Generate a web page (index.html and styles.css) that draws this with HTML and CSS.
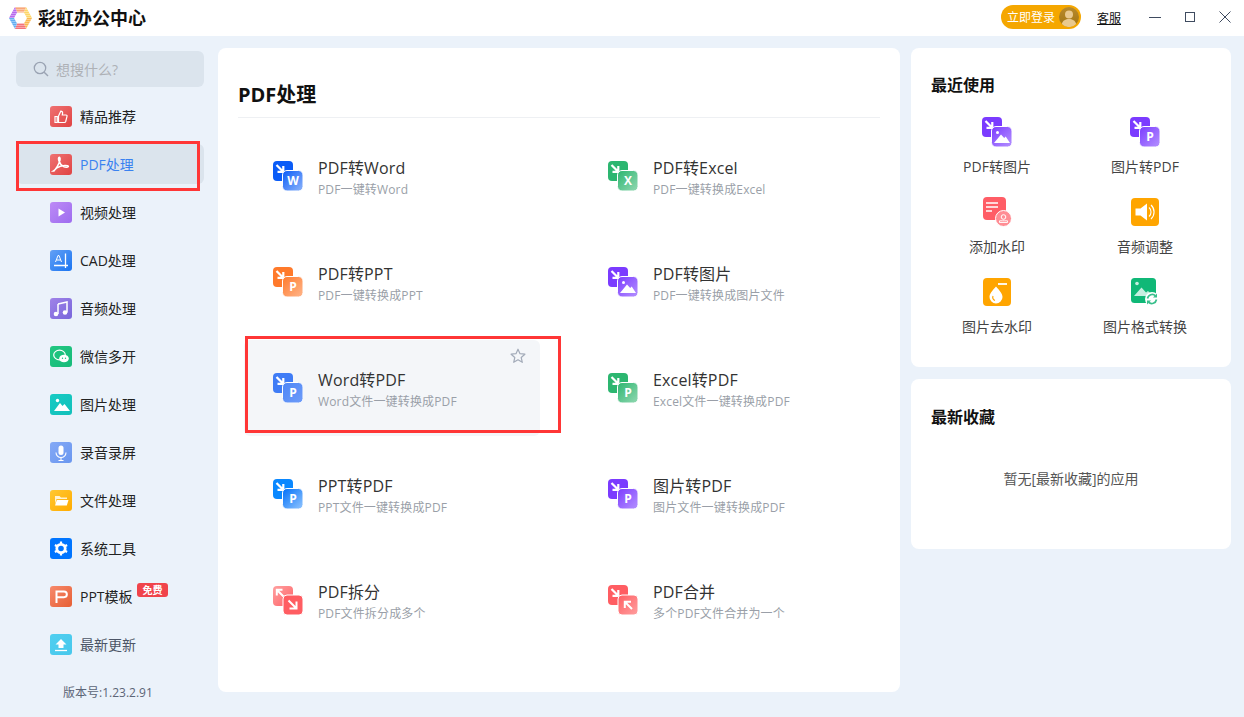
FILE: index.html
```html
<!DOCTYPE html>
<html lang="zh-CN">
<head>
<meta charset="utf-8">
<title>彩虹办公中心</title>
<link rel="stylesheet" href="styles.css">
</head>
<body>
<svg class="defs" width="0" height="0" aria-hidden="true">
  <defs>
    <linearGradient id="s-red" x1="0" y1="0" x2="1" y2="1"><stop offset="0" stop-color="#ef7272"/><stop offset="1" stop-color="#e04343"/></linearGradient>
    <linearGradient id="s-purple" x1="0" y1="0" x2="1" y2="1"><stop offset="0" stop-color="#bd8bf6"/><stop offset="1" stop-color="#9d6cef"/></linearGradient>
    <linearGradient id="s-blue" x1="0" y1="0" x2="1" y2="1"><stop offset="0" stop-color="#63a0f5"/><stop offset="1" stop-color="#1a75f2"/></linearGradient>
    <linearGradient id="s-music" x1="0" y1="0" x2="1" y2="1"><stop offset="0" stop-color="#a083e8"/><stop offset="1" stop-color="#7866db"/></linearGradient>
    <linearGradient id="s-green" x1="0" y1="0" x2="1" y2="1"><stop offset="0" stop-color="#22c781"/><stop offset="1" stop-color="#17bb7a"/></linearGradient>
    <linearGradient id="s-teal" x1="0" y1="0" x2="1" y2="1"><stop offset="0" stop-color="#18cbc4"/><stop offset="1" stop-color="#12c0ba"/></linearGradient>
    <linearGradient id="s-mic" x1="0" y1="0" x2="1" y2="1"><stop offset="0" stop-color="#84a9f6"/><stop offset="1" stop-color="#6a97ef"/></linearGradient>
    <linearGradient id="s-folder" x1="0" y1="0" x2="1" y2="1"><stop offset="0" stop-color="#ffc832"/><stop offset="1" stop-color="#ffab00"/></linearGradient>
    <linearGradient id="s-ppt" x1="0" y1="0" x2="1" y2="1"><stop offset="0" stop-color="#f78a6c"/><stop offset="1" stop-color="#e65f34"/></linearGradient>
    <linearGradient id="s-up" x1="0" y1="0" x2="1" y2="1"><stop offset="0" stop-color="#50cff0"/><stop offset="1" stop-color="#48c8ec"/></linearGradient>

    <linearGradient id="f-word" x1="0" y1="0" x2="1" y2="1"><stop offset="0" stop-color="#0a5cf7"/><stop offset="1" stop-color="#8db4fb"/></linearGradient>
    <linearGradient id="f-orange" x1="0" y1="0" x2="1" y2="1"><stop offset="0" stop-color="#ff7a2b"/><stop offset="1" stop-color="#ffb68c"/></linearGradient>
    <linearGradient id="f-w2p" x1="0" y1="0" x2="1" y2="1"><stop offset="0" stop-color="#4e86f6"/><stop offset="1" stop-color="#6e9cf9"/></linearGradient>
    <linearGradient id="f-green" x1="0" y1="0" x2="1" y2="1"><stop offset="0" stop-color="#2cb670"/><stop offset="1" stop-color="#93d8b2"/></linearGradient>
    <linearGradient id="f-purple" x1="0" y1="0" x2="1" y2="1"><stop offset="0" stop-color="#7b3bff"/><stop offset="1" stop-color="#b592ff"/></linearGradient>
    <linearGradient id="f-ppt2" x1="0" y1="0" x2="1" y2="1"><stop offset="0" stop-color="#006ff8"/><stop offset="1" stop-color="#93c6ff"/></linearGradient>
    <linearGradient id="f-pink" x1="0" y1="0" x2="1" y2="1"><stop offset="0" stop-color="#ff5d62"/><stop offset="1" stop-color="#ffa0a0"/></linearGradient>
    <linearGradient id="b-pink" x1="0" y1="0" x2="1" y2="1"><stop offset="0" stop-color="#ffa0a0"/><stop offset="1" stop-color="#ff6267"/></linearGradient>

    <linearGradient id="av" x1="0" y1="0" x2="0" y2="1"><stop offset="0" stop-color="#b88a2c"/><stop offset="1" stop-color="#a27512"/></linearGradient>
    <pattern id="stripes" width="2" height="2" patternUnits="userSpaceOnUse"><rect width="2" height="1" fill="#fff" fill-opacity=".35"/></pattern>

    <symbol id="arr" viewBox="0 0 30 30"><path d="M3.500 4 9.500 10M10.300 5V10.800H4.500" fill="none" stroke="#fff" stroke-width="2.200"/></symbol>
    <symbol id="pic" viewBox="0 0 30 30"><circle cx="15.500" cy="15.500" r="1.500" fill="#fff"/><path d="M12 26 19 17.500l3.200 3.500 1.500-1.500L28 26z" fill="#fff"/></symbol>
  </defs>
</svg>

<div class="app">
  <header class="titlebar">
    <svg class="logo" viewBox="0 0 24 22" width="24" height="22" aria-hidden="true">
      <polygon points="6,0 17,0 15,5.500 8,5.500" fill="#f9a779"/>
      <polygon points="17,0 23,11 18,11 15,5.500" fill="#fdd668"/>
      <polygon points="23,11 17,22 15,16.500 18,11" fill="#fbb84f"/>
      <polygon points="17,22 6,22 8,16.500 15,16.500" fill="#f4747a"/>
      <polygon points="6,22 0,11 5,11 8,16.500" fill="#62aef2"/>
      <polygon points="0,11 6,0 8,5.500 5,11" fill="#b769ee"/>
      <path d="M6 0H17L23 11 17 22H6L0 11ZM8 5.500 5 11 8 16.500H15L18 11 15 5.500Z" fill="url(#stripes)" fill-rule="evenodd"/>
    </svg>
    <span class="app-name">彩虹办公中心</span>
    <div class="title-actions">
      <div class="login">
        <span>立即登录</span>
        <svg class="avatar" viewBox="0 0 20 20" width="20" height="20" aria-hidden="true">
          <circle cx="10" cy="10" r="10" fill="url(#av)"/>
          <circle cx="10" cy="7.500" r="4" fill="#e9c98e"/>
          <path d="M2.800 17c1-3.600 3.800-5 7.200-5s6.200 1.400 7.200 5a10 10 0 0 1-14.400 0z" fill="#e9c98e"/>
        </svg>
      </div>
      <a class="service">客服</a>
      <svg class="win min" viewBox="0 0 12 12" width="12" height="12" aria-hidden="true"><path d="M0 6.500H12" stroke="#3f4b60" fill="none"/></svg>
      <svg class="win max" viewBox="0 0 12 12" width="12" height="12" aria-hidden="true"><rect x="1.500" y="1.500" width="9" height="9" stroke="#3f4b60" fill="none"/></svg>
      <svg class="win close" viewBox="0 0 12 12" width="12" height="12" aria-hidden="true"><path d="M.5.500 11.500 11.500M11.500.500.500 11.500" stroke="#3f4b60" fill="none"/></svg>
    </div>
  </header>

  <div class="content">
    <aside class="sidebar">
      <div class="search">
        <svg viewBox="0 0 16 16" width="16" height="16" aria-hidden="true"><circle cx="7" cy="7" r="5.700" fill="none" stroke="#9aa3b3" stroke-width="1.300"/><path d="M11.200 11.200 15 15" stroke="#9aa3b3" stroke-width="1.400" fill="none"/></svg>
        <span>想搜什么?</span>
      </div>
      <nav class="menu">
        <a class="menu-item">
          <svg class="mi" viewBox="0 0 22 21" aria-hidden="true"><rect width="22" height="21" rx="3" fill="url(#s-red)"/><path d="M5 10.500H7.200V16.500H5zM8.500 10 10.800 5.200c1.300 0 1.900.8 1.800 1.900L12.300 9H16c.8 0 1.200.6 1 1.300L15.700 15.500c-.2.700-.7 1-1.300 1H8.500z" fill="none" stroke="#fff" stroke-width="1.200"/></svg>
          <span>精品推荐</span>
        </a>
        <a class="menu-item active">
          <svg class="mi" viewBox="0 0 22 21" aria-hidden="true"><rect width="22" height="21" rx="3" fill="url(#s-red)"/><path d="M3.500 17C6 15.500 9 10 10 6c.3-1.500-.2-2.800-.8-2.800S8.200 4.500 8.800 6.500c.8 2.500 3 5.200 5 6.200 1.500.6 4 .6 4.500-.1.400-.8-1.500-1.200-3.500-1.100-2.500.1-6 1-8 2.500-1.300 1-2.300 2-2.800 3z" fill="none" stroke="#fff" stroke-width="1.500"/></svg>
          <span>PDF处理</span>
        </a>
        <a class="menu-item">
          <svg class="mi" viewBox="0 0 22 21" aria-hidden="true"><rect width="22" height="21" rx="3" fill="url(#s-purple)"/><path d="M8.500 6.500 15 10.500 8.500 14.500z" fill="#fff"/></svg>
          <span>视频处理</span>
        </a>
        <a class="menu-item">
          <svg class="mi" viewBox="0 0 22 21" aria-hidden="true"><rect width="22" height="21" rx="3" fill="url(#s-blue)"/><path d="M4 15.500H18M15.500 3.500V18" stroke="#fff" stroke-width="1.300" fill="none"/><path d="M5.500 12 8 5.500h1L11.500 12M6.500 10h4" stroke="#fff" fill="none"/></svg>
          <span>CAD处理</span>
        </a>
        <a class="menu-item">
          <svg class="mi" viewBox="0 0 22 21" aria-hidden="true"><rect width="22" height="21" rx="3" fill="url(#s-music)"/><path d="M8 6 17 4V14.500" fill="none" stroke="#fff" stroke-width="1.500"/><path d="M8 6V16" stroke="#fff" stroke-width="1.500"/><circle cx="6" cy="16" r="2.300" fill="#fff"/><circle cx="15" cy="14.500" r="2.300" fill="#fff"/></svg>
          <span>音频处理</span>
        </a>
        <a class="menu-item">
          <svg class="mi" viewBox="0 0 22 21" aria-hidden="true"><rect width="22" height="21" rx="3" fill="url(#s-green)"/><ellipse cx="9.500" cy="9" rx="5.800" ry="4.800" fill="none" stroke="#fff" stroke-width="1.200"/><ellipse cx="14" cy="12.500" rx="4.800" ry="3.800" fill="#fff"/><circle cx="12.500" cy="12.300" r=".7" fill="#1cc17f"/><circle cx="15.500" cy="12.300" r=".7" fill="#1cc17f"/></svg>
          <span>微信多开</span>
        </a>
        <a class="menu-item">
          <svg class="mi" viewBox="0 0 22 21" aria-hidden="true"><rect width="22" height="21" rx="3" fill="url(#s-teal)"/><circle cx="7.500" cy="6.500" r="1.700" fill="#fff"/><path d="M4 17 10 9l2.500 3 2-2L20 17z" fill="#fff"/></svg>
          <span>图片处理</span>
        </a>
        <a class="menu-item">
          <svg class="mi" viewBox="0 0 22 21" aria-hidden="true"><rect width="22" height="21" rx="3" fill="url(#s-mic)"/><rect x="8.500" y="3.500" width="5" height="9.500" rx="2.500" fill="#fff"/><path d="M6 10.500a5 5 0 0 0 10 0M11 15.500V18.500M8.500 18.500h5" fill="none" stroke="#fff" stroke-width="1.100"/></svg>
          <span>录音录屏</span>
        </a>
        <a class="menu-item">
          <svg class="mi" viewBox="0 0 22 21" aria-hidden="true"><rect width="22" height="21" rx="3" fill="url(#s-folder)"/><path d="M5 6h4.500l1.500 1.500H17V9H6.500L5 14z" fill="#fff" fill-opacity=".8"/><path d="M6.800 10H18.500L16.800 15.500H5z" fill="#fff"/></svg>
          <span>文件处理</span>
        </a>
        <a class="menu-item">
          <svg class="mi" viewBox="0 0 22 21" aria-hidden="true"><rect width="22" height="21" rx="3" fill="#0075ff"/><circle cx="11" cy="10.500" r="4.200" fill="none" stroke="#fff" stroke-width="2.800"/><path d="M11 3.500V6M11 15V17.500M4.900 7 7.100 8.200M14.900 12.800 17.100 14M4.900 14 7.100 12.800M14.900 8.200 17.100 7" stroke="#fff" stroke-width="2.200" fill="none"/></svg>
          <span>系统工具</span>
        </a>
        <a class="menu-item">
          <svg class="mi" viewBox="0 0 22 21" aria-hidden="true"><rect width="22" height="21" rx="3" fill="url(#s-ppt)"/><path d="M6.500 17V5.500H14a2.800 2.800 0 0 1 0 5.700H7" fill="none" stroke="#fff" stroke-width="2"/></svg>
          <span>PPT模板</span>
          <em class="badge">免费</em>
        </a>
        <a class="menu-item muted">
          <svg class="mi" viewBox="0 0 22 21" aria-hidden="true"><rect width="22" height="21" rx="3" fill="url(#s-up)"/><path d="M11 5 16.500 10.500H13.500V14H8.500V10.500H5.500z" fill="#fff"/><path d="M5 16.500H17" stroke="#fff" stroke-width="1.300"/></svg>
          <span>最新更新</span>
        </a>
      </nav>
      <div class="version">版本号:1.23.2.91</div>
    </aside>

    <main class="panel">
      <h2 class="panel-title">PDF处理</h2>
      <div class="tools">
        <a class="tool">
          <svg class="ti" viewBox="0 0 30 30" aria-hidden="true"><rect width="20" height="20" rx="4" fill="#0a5cf7"/><use href="#arr"/><rect x="9.500" y="9.500" width="20.500" height="20.500" rx="4.500" fill="url(#f-word)" stroke="#fff"/><text x="20" y="24" class="ltr">W</text></svg>
          <div class="tool-text"><b>PDF转Word</b><small>PDF一键转Word</small></div>
        </a>
        <a class="tool">
          <svg class="ti" viewBox="0 0 30 30" aria-hidden="true"><rect width="20" height="20" rx="4" fill="#2cb670"/><use href="#arr"/><rect x="9.500" y="9.500" width="20.500" height="20.500" rx="4.500" fill="url(#f-green)" stroke="#fff"/><text x="20" y="24" class="ltr">X</text></svg>
          <div class="tool-text"><b>PDF转Excel</b><small>PDF一键转换成Excel</small></div>
        </a>
        <a class="tool">
          <svg class="ti" viewBox="0 0 30 30" aria-hidden="true"><rect width="20" height="20" rx="4" fill="#ff7a2b"/><use href="#arr"/><rect x="9.500" y="9.500" width="20.500" height="20.500" rx="4.500" fill="url(#f-orange)" stroke="#fff"/><text x="20" y="24" class="ltr">P</text></svg>
          <div class="tool-text"><b>PDF转PPT</b><small>PDF一键转换成PPT</small></div>
        </a>
        <a class="tool">
          <svg class="ti" viewBox="0 0 30 30" aria-hidden="true"><rect width="20" height="20" rx="4" fill="#7b3bff"/><use href="#arr"/><rect x="9.500" y="9.500" width="20.500" height="20.500" rx="4.500" fill="url(#f-purple)" stroke="#fff"/><use href="#pic"/></svg>
          <div class="tool-text"><b>PDF转图片</b><small>PDF一键转换成图片文件</small></div>
        </a>
        <a class="tool hover">
          <svg class="ti" viewBox="0 0 30 30" aria-hidden="true"><rect width="20" height="20" rx="4" fill="#3f7cf6"/><use href="#arr"/><rect x="9.500" y="9.500" width="20.500" height="20.500" rx="4.500" fill="url(#f-w2p)" stroke="#fff"/><text x="20" y="24" class="ltr">P</text></svg>
          <div class="tool-text"><b>Word转PDF</b><small>Word文件一键转换成PDF</small></div>
          <svg class="star" viewBox="0 0 16 16" width="16" height="16" aria-hidden="true"><path d="M8 1.200 10 5.700 14.900 6.200 11.200 9.500 12.300 14.300 8 11.800 3.700 14.300 4.800 9.500 1.100 6.200 6 5.700z" fill="none" stroke="#a3abb9" stroke-width="1.200" stroke-linejoin="round"/></svg>
        </a>
        <a class="tool">
          <svg class="ti" viewBox="0 0 30 30" aria-hidden="true"><rect width="20" height="20" rx="4" fill="#2cb670"/><use href="#arr"/><rect x="9.500" y="9.500" width="20.500" height="20.500" rx="4.500" fill="url(#f-green)" stroke="#fff"/><text x="20" y="24" class="ltr">P</text></svg>
          <div class="tool-text"><b>Excel转PDF</b><small>Excel文件一键转换成PDF</small></div>
        </a>
        <a class="tool">
          <svg class="ti" viewBox="0 0 30 30" aria-hidden="true"><rect width="20" height="20" rx="4" fill="#0a88ff"/><use href="#arr"/><rect x="9.500" y="9.500" width="20.500" height="20.500" rx="4.500" fill="url(#f-ppt2)" stroke="#fff"/><text x="20" y="24" class="ltr">P</text></svg>
          <div class="tool-text"><b>PPT转PDF</b><small>PPT文件一键转换成PDF</small></div>
        </a>
        <a class="tool">
          <svg class="ti" viewBox="0 0 30 30" aria-hidden="true"><rect width="20" height="20" rx="4" fill="#7b3bff"/><use href="#arr"/><rect x="9.500" y="9.500" width="20.500" height="20.500" rx="4.500" fill="url(#f-purple)" stroke="#fff"/><text x="20" y="24" class="ltr">P</text></svg>
          <div class="tool-text"><b>图片转PDF</b><small>图片文件一键转换成PDF</small></div>
        </a>
        <a class="tool">
          <svg class="ti" viewBox="0 0 30 30" aria-hidden="true"><rect y="1" width="20" height="20" rx="4" fill="url(#b-pink)"/><path d="M10.500 11.500 4.500 5.500M3.800 10.500V4.800H9.500" fill="none" stroke="#fff" stroke-width="2"/><rect x="10" y="10" width="20" height="20" rx="4" fill="#ff5d62" stroke="#fff"/><path d="M15.500 15.500 22.500 22.500M23.500 16.500V23.500H16.500" fill="none" stroke="#fff" stroke-width="2"/></svg>
          <div class="tool-text"><b>PDF拆分</b><small>PDF文件拆分成多个</small></div>
        </a>
        <a class="tool">
          <svg class="ti" viewBox="0 0 30 30" aria-hidden="true"><rect width="20" height="20" rx="4" fill="#ff5d62"/><use href="#arr"/><rect x="10" y="10" width="20" height="20" rx="4" fill="url(#f-pink)" stroke="#fff"/><path d="M24 24 17.500 17.500M16.800 23V16.800H23" fill="none" stroke="#fff" stroke-width="2"/></svg>
          <div class="tool-text"><b>PDF合并</b><small>多个PDF文件合并为一个</small></div>
        </a>
      </div>
    </main>

    <aside class="right">
      <section class="card recent">
        <h3>最近使用</h3>
        <div class="recent-grid">
          <a class="recent-item">
            <svg class="ri" viewBox="0 0 30 30" aria-hidden="true"><rect width="20" height="20" rx="4" fill="#7b3bff"/><use href="#arr"/><rect x="9.500" y="9.500" width="20.500" height="20.500" rx="4.500" fill="url(#f-purple)" stroke="#fff"/><use href="#pic"/></svg>
            <span>PDF转图片</span>
          </a>
          <a class="recent-item">
            <svg class="ri" viewBox="0 0 30 30" aria-hidden="true"><rect width="20" height="20" rx="4" fill="#7b3bff"/><use href="#arr"/><rect x="9.500" y="9.500" width="20.500" height="20.500" rx="4.500" fill="url(#f-purple)" stroke="#fff"/><text x="20" y="24" class="ltr">P</text></svg>
            <span>图片转PDF</span>
          </a>
          <a class="recent-item">
            <svg class="ri" viewBox="0 0 30 30" aria-hidden="true"><rect x="1" width="23" height="23" rx="4" fill="#ff5d66"/><path d="M4 6H16M4 10H16M4 14H10" stroke="#fff" stroke-width="1.500" fill="none"/><circle cx="21.500" cy="21.500" r="8" fill="#ff8d94" stroke="#fff"/><circle cx="21.500" cy="20" r="2.300" fill="none" stroke="#fff"/><path d="M17.500 25.500H25.500V23.800H22.500L20.500 23.800H17.500z" fill="none" stroke="#fff" stroke-width=".9"/></svg>
            <span>添加水印</span>
          </a>
          <a class="recent-item">
            <svg class="ri" viewBox="0 0 30 30" aria-hidden="true"><rect x="1" y="1" width="28" height="28" rx="4" fill="#ffa500"/><path d="M5.500 11.500H10.500L17 6.500V23.500L10.500 18.500H5.500z" fill="#fff"/><path d="M19 10.500a6 6 0 0 1 0 9M21 8a9.500 9.500 0 0 1 0 14" fill="none" stroke="#fff" stroke-width="1.100"/></svg>
            <span>音频调整</span>
          </a>
          <a class="recent-item">
            <svg class="ri" viewBox="0 0 30 30" aria-hidden="true"><rect x="1" y="1" width="28" height="28" rx="4" fill="#ffa500"/><path d="M16 7H25" stroke="#fff" stroke-width="1.800"/><path d="M14 9.500c3.500 4 6.500 7 6.500 10.500a6.500 6.500 0 0 1-13 0c0-3.500 3-6.500 6.500-10.500z" fill="#fff"/><path d="M11 19c-.8 2 .2 4 2 4.500" fill="none" stroke="#ffa500" stroke-width="1.200"/></svg>
            <span>图片去水印</span>
          </a>
          <a class="recent-item">
            <svg class="ri" viewBox="0 0 30 30" aria-hidden="true"><rect x="1" y="1" width="25" height="25" rx="3.500" fill="#10b877"/><circle cx="7" cy="6.500" r="1.800" fill="#c6efe0"/><path d="M4 19 11.500 10.500 16 15.500 18 14 23 19z" fill="#c6efe0"/><circle cx="22" cy="22" r="7" fill="#fff"/><path d="M17.500 21.500a4.800 4.800 0 0 1 8-2.700M26.500 22.500a4.800 4.800 0 0 1-8 2.700" fill="none" stroke="#39bf8c" stroke-width="1.700"/><path d="M27 16.500V20.500H23zM17 27.500V23.500H21z" fill="#39bf8c"/></svg>
            <span>图片格式转换</span>
          </a>
        </div>
      </section>
      <section class="card favourites">
        <h3>最新收藏</h3>
        <p>暂无[最新收藏]的应用</p>
      </section>
    </aside>
  </div>

  <div class="mark mark-side"></div>
  <div class="mark mark-tool"></div>
</div>
</body>
</html>
```

FILE: styles.css
```css
* { box-sizing: border-box; }
html, body { margin: 0; padding: 0; height: 100%; overflow: hidden; }
body {
  background: #ebf2fa;
  color: #333;
  font-family: "Open Sans", "Noto Sans CJK SC", sans-serif;
}
a { color: inherit; text-decoration: none; }
.defs { display: block; height: 0; width: 0; }
.app { position: relative; width: 1244px; height: 717px; }

.titlebar {
  height: 36px;
  background: #fff;
  display: flex;
  align-items: center;
  padding: 0 13px 0 9px;
}
.logo { display: block; margin-right: 5px; }
.app-name { font-size: 18px; font-weight: 700; color: #111; line-height: 24px; }
.title-actions { margin-left: auto; display: flex; align-items: center; }
.login {
  width: 80px; height: 24px;
  margin-top: -2px;
  background: #f5a700;
  border-radius: 12px;
  display: flex;
  align-items: center;
  justify-content: space-between;
  padding: 0 1px 0 6px;
  color: #fff;
  font-size: 12px;
}
.avatar { display: block; margin-right: 1px; }
.service { margin-left: 16px; font-size: 12px; color: #111; text-decoration: underline; }
.win { display: block; margin-top: -2px; }
.min { margin-left: 28px; }
.max { margin-left: 23px; }
.close { margin-left: 23px; }

.content { display: flex; align-items: flex-start; padding-top: 12px; }

.sidebar { width: 218px; flex: none; padding: 3px 14px 0 16px; }
.search {
  height: 36px;
  background: #dbe4ed;
  border-radius: 6px;
  display: flex;
  align-items: center;
  gap: 7px;
  padding-left: 17px;
  font-size: 14px;
  color: #aeb1b6;
}
.menu { margin-top: 9px; display: flex; flex-direction: column; gap: 8px; }
.menu-item {
  position: relative;
  height: 40px;
  border-radius: 6px;
  display: flex;
  align-items: center;
  gap: 8px;
  padding-left: 34px;
  font-size: 14px;
  color: #222;
}
.menu-item.active { background: #dbe4ed; color: #3a82f0; }
.menu-item.muted { color: #4c5566; }
.mi { width: 22px; height: 21px; flex: none; display: block; }
.badge {
  position: absolute;
  left: 121px;
  top: 7px;
  width: 31px;
  height: 14px;
  background: #f0444b;
  border-radius: 3px;
  color: #fff;
  font-size: 10px;
  font-weight: 700;
  font-style: normal;
  line-height: 14px;
  text-align: center;
}
.version {
  margin: 20px 0 0 47px;
  font-size: 12px;
  line-height: 18px;
  color: #5c6577;
  white-space: nowrap;
}

.panel {
  width: 682px;
  height: 644px;
  flex: none;
  background: #fff;
  border-radius: 8px;
  padding: 0 20px;
}
.panel-title {
  margin: 0;
  height: 70px;
  padding-top: 33px;
  font-size: 20px;
  line-height: 28px;
  font-weight: 700;
  color: #111;
  border-bottom: 1px solid #eef0f3;
}
.tools {
  margin: 10px 0 0 6px;
  display: grid;
  grid-template-columns: 296px 296px;
  column-gap: 39px;
  grid-auto-rows: 96px;
  row-gap: 10px;
}
.tool {
  position: relative;
  display: flex;
  align-items: center;
  gap: 15px;
  padding-left: 29px;
  border-radius: 6px;
}
.tool.hover { background: #f4f6f9; }
.ti { width: 30px; height: 30px; flex: none; display: block; }
.ltr { font-size: 12px; font-weight: 700; fill: #fff; text-anchor: middle; font-family: "Open Sans", sans-serif; }
.tool-text { display: flex; flex-direction: column; margin-top: 6px; letter-spacing: .15px; }
.tool-text b { font-weight: 400; font-size: 16px; line-height: 22px; color: #333; }
.tool-text small { font-size: 12px; line-height: 22px; color: #9a9fa8; }
.star { position: absolute; right: 14px; top: 8px; display: block; }

.right { width: 320px; margin-left: 11px; flex: none; display: flex; flex-direction: column; gap: 12px; }
.card { background: #fff; border-radius: 8px; }
.card h3 {
  margin: 0;
  padding: 25px 0 0 20px;
  font-size: 16px;
  line-height: 24px;
  font-weight: 700;
  color: #111;
}
.recent { height: 319px; }
.recent-grid {
  margin-top: 20px;
  padding: 0 12px;
  display: grid;
  grid-template-columns: 148px 148px;
  grid-auto-rows: 80px;
}
.recent-item {
  display: flex;
  flex-direction: column;
  align-items: center;
  gap: 10px;
  font-size: 14px;
  color: #444;
}
.recent-item span { line-height: 20px; }
.ri { width: 30px; height: 30px; display: block; flex: none; }
.favourites { height: 170px; }
.favourites h3 { padding-top: 26px; }
.favourites p {
  margin: 40px 0 0;
  text-align: center;
  font-size: 14px;
  line-height: 20px;
  color: #555;
}

.mark { position: absolute; border: 3.500px solid #ff3636; pointer-events: none; }
.mark-side { left: 16px; top: 141px; width: 184px; height: 50px; }
.mark-tool { left: 245px; top: 336px; width: 316px; height: 97px; }
```
